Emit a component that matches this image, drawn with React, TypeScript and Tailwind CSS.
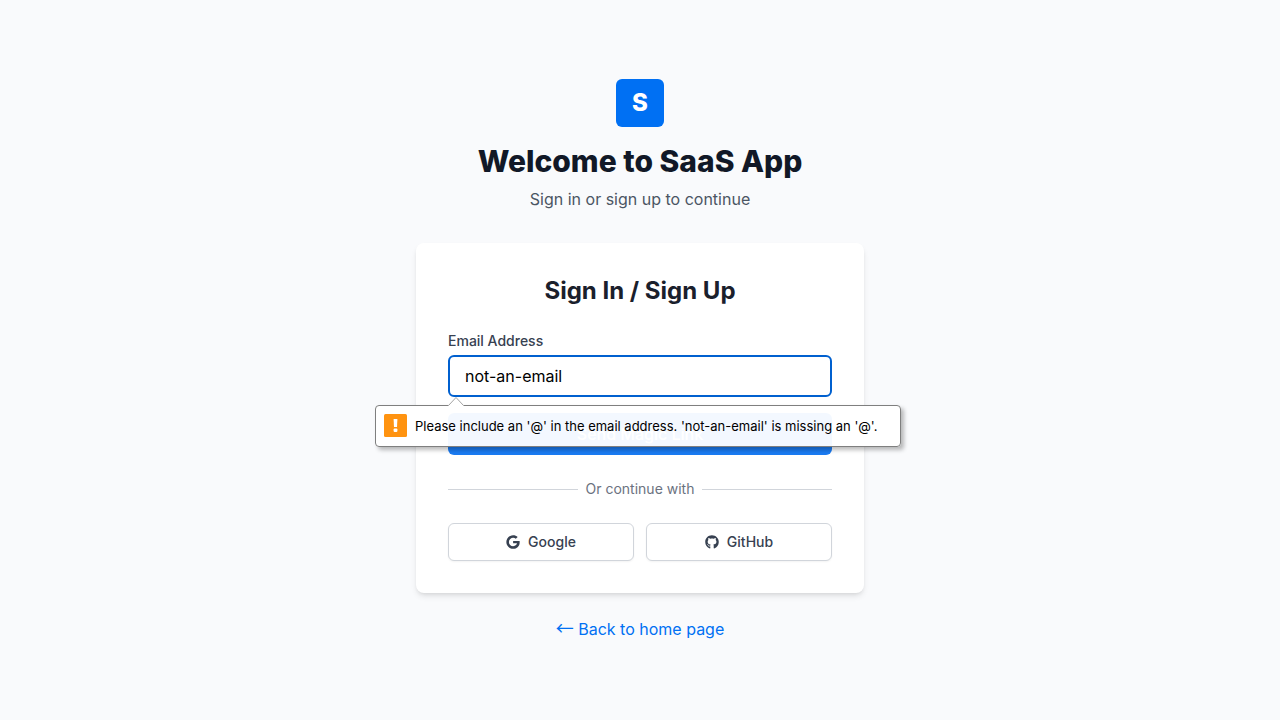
import { useState } from "react";
import { FaGithub, FaGoogle } from "react-icons/fa";

function ValidationBubble({ message }: { message: string }) {
  return (
    <div
      id="email-error"
      role="alert"
      className="absolute top-full -left-[73px] z-10 mt-2 flex h-[42px] min-w-[526px] items-center gap-2 rounded border border-[#7f7f7f] bg-white/95 px-2 text-[13px] leading-5 whitespace-nowrap text-black shadow-[3px_3px_4px_rgba(0,0,0,0.27)]"
    >
      <svg className="absolute -top-[9px] left-[72px]" width="16" height="10" viewBox="0 0 16 10" aria-hidden="true">
        <path d="M0 10 L0.5 8.5 L8 0.5 L15.5 8.5 L16 10 Z" fill="#fff" />
        <path d="M0.5 8.5 L8 0.5 L15.5 8.5" fill="none" stroke="#a3a3a3" />
      </svg>
      <svg width="23" height="24" viewBox="0 0 23 24" aria-hidden="true">
        <rect width="23" height="23" rx="1.5" fill="#ff9310" />
        <path d="M9.6 5h3.8l-.4 8h-3z" fill="#fff" />
        <rect x="9.6" y="14.6" width="3.8" height="3.4" rx="1" fill="#fff" />
      </svg>
      <span>{message}</span>
    </div>
  );
}

const providers = [
  { name: "Google", Icon: FaGoogle },
  { name: "GitHub", Icon: FaGithub },
];

export default function App() {
  const [email, setEmail] = useState("not-an-email");
  const missingAt = email !== "" && !email.includes("@");

  return (
    <main className="flex min-h-screen flex-col items-center justify-center bg-[#f9fafc] px-4 font-['Inter',sans-serif] text-base">
      <div className="w-full max-w-md">
        <header className="mb-8 flex flex-col items-center text-center">
          <div className="flex size-12 items-center justify-center rounded-md bg-[#0070f3] text-2xl font-extrabold text-white">
            S
          </div>
          <h1 className="mt-4 text-3xl font-extrabold text-[#111827]">Welcome to SaaS App</h1>
          <p className="mt-2 text-[#4b5563]">Sign in or sign up to continue</p>
        </header>

        <section className="rounded-lg bg-white p-8 shadow-md">
          <h2 className="mb-6 text-center text-2xl font-bold text-[#1a202c]">Sign In / Sign Up</h2>
          <form noValidate className="space-y-4" onSubmit={(e) => e.preventDefault()}>
            <div className="relative">
              <label htmlFor="email" className="mb-1 block text-sm font-medium text-[#374151]">
                Email Address
              </label>
              <input
                id="email"
                type="email"
                value={email}
                onChange={(e) => setEmail(e.target.value)}
                aria-describedby="email-error"
                className="block h-[42px] w-full rounded-md border-2 border-[#0060cf] bg-white px-[15px] text-black outline-none"
              />
              {missingAt && (
                <ValidationBubble
                  message={`Please include an '@' in the email address. '${email}' is missing an '@'.`}
                />
              )}
            </div>
            <button
              type="submit"
              className="block h-[42px] w-full rounded-md bg-[#1a7bf2] font-medium text-white"
            >
              Send Magic Link
            </button>
          </form>

          <div className="my-6 flex items-center gap-2 text-sm text-[#6b7280]">
            <span className="h-px flex-1 bg-[#d1d5db]" />
            Or continue with
            <span className="h-px flex-1 bg-[#d1d5db]" />
          </div>

          <div className="grid grid-cols-2 gap-3">
            {providers.map(({ name, Icon }) => (
              <button
                key={name}
                type="button"
                className="flex h-[38px] items-center justify-center gap-2 rounded-md border border-[#d1d5db] bg-white text-sm font-medium text-[#374151] shadow-xs"
              >
                <Icon aria-hidden="true" />
                {name}
              </button>
            ))}
          </div>
        </section>

        <p className="mt-6 text-center">
          <a href="#home" className="text-[#0070f3]">
            <span className="font-['Noto_Sans_CJK_JP',sans-serif] text-lg leading-none">←</span> Back to home page
          </a>
        </p>
      </div>
    </main>
  );
}
